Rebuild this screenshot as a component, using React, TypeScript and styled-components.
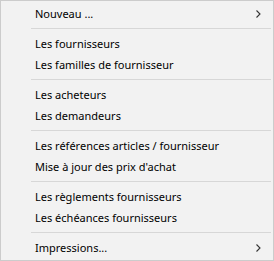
import styled, { createGlobalStyle } from "styled-components";

type Entry = { label?: string; sub?: boolean; sep?: boolean };

const entries: Entry[] = [
  { label: "Nouveau ...", sub: true },
  { sep: true },
  { label: "Les fournisseurs" },
  { label: "Les familles de fournisseur" },
  { sep: true },
  { label: "Les acheteurs" },
  { label: "Les demandeurs" },
  { sep: true },
  { label: "Les références articles / fournisseur" },
  { label: "Mise à jour des prix d'achat" },
  { sep: true },
  { label: "Les règlements fournisseurs" },
  { label: "Les échéances fournisseurs" },
  { sep: true },
  { label: "Impressions...", sub: true },
];

const GlobalStyle = createGlobalStyle`
  html, body {
    margin: 0;
    padding: 0;
    background: #f0f0f0;
  }
`;

const Menu = styled.ul`
  list-style: none;
  margin: 0;
  padding: 2px 0;
  width: 274px;
  height: 261px;
  box-sizing: border-box;
  border: 1px solid #cccccc;
  background: #f2f2f2;
  font-family: "Noto Sans", "Open Sans", sans-serif;
  font-size: 11px;
  color: #000;
`;

const Item = styled.li`
  display: flex;
  align-items: center;
  justify-content: space-between;
  height: 21px;
  padding: 0 12px 0 34px;
  box-sizing: border-box;
  cursor: default;
  white-space: nowrap;
`;

const Separator = styled.li`
  height: 9px;
  display: flex;
  align-items: center;
  padding: 0 2px 0 30px;

  &::after {
    content: "";
    flex: 1;
    height: 1px;
    background: #d7d7d7;
  }
`;

const Chevron = () => (
  <svg width="5" height="8" viewBox="0 0 5 8">
    <path d="M0.5 0.5 L4 4 L0.5 7.5" fill="none" stroke="#333" strokeWidth="1.1" />
  </svg>
);

export default function App() {
  return (
    <>
      <GlobalStyle />
      <Menu>
        {entries.map((e, i) =>
          e.sep ? (
            <Separator key={i} />
          ) : (
            <Item key={i}>
              <span>{e.label}</span>
              {e.sub && <Chevron />}
            </Item>
          )
        )}
      </Menu>
    </>
  );
}
